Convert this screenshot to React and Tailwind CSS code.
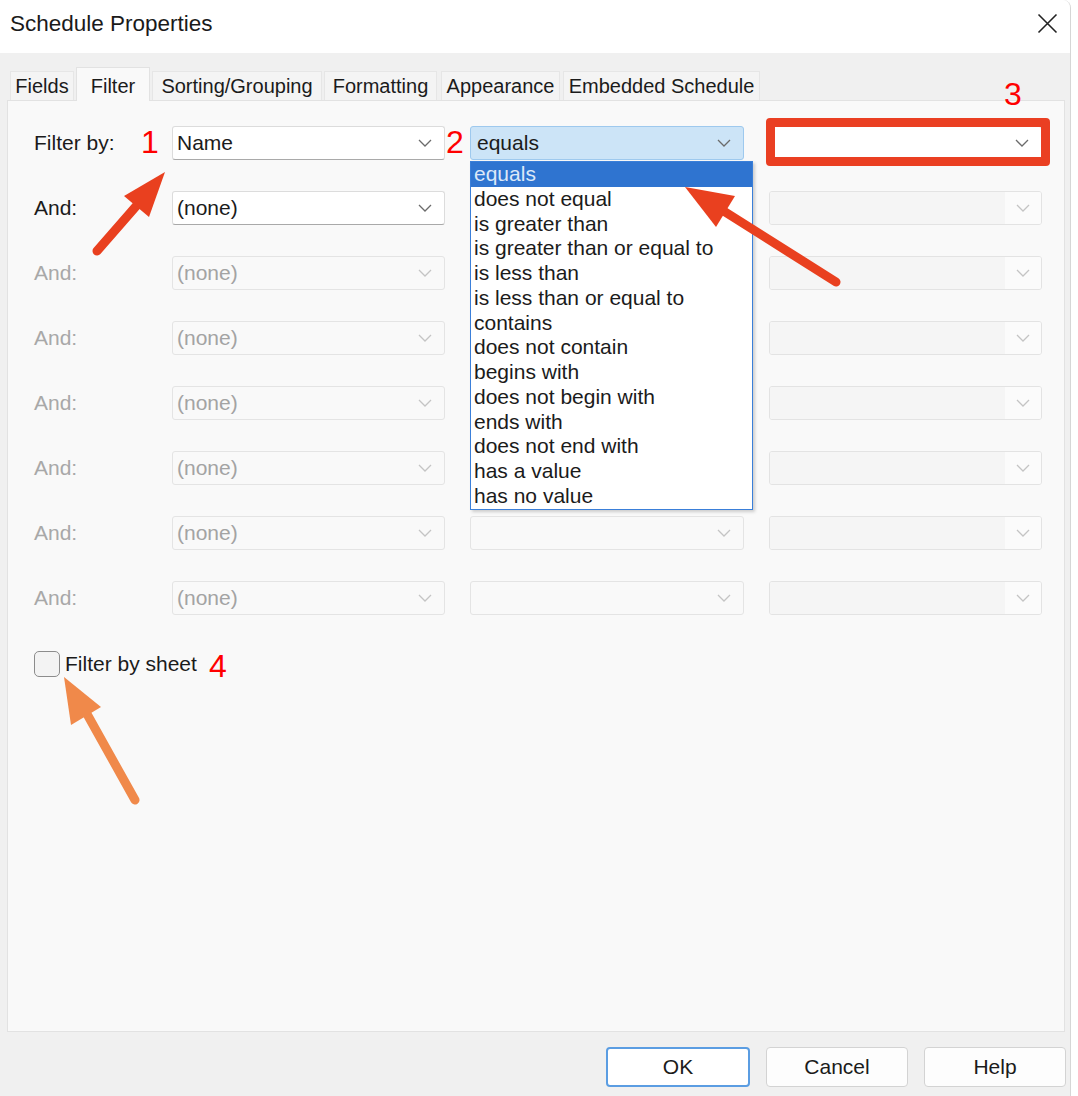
import React from "react";

const FONT = { fontFamily: '"Liberation Sans", Arial, sans-serif' };

function Chevron({ color = "#6b6b6b" }) {
  return (
    <svg width="14" height="8" viewBox="0 0 14 8" fill="none">
      <path d="M1 1l6 6 6-6" stroke={color} strokeWidth="1.3" />
    </svg>
  );
}

function Combo({ value = "", kind = "enabled" }) {
  if (kind === "focused") {
    return (
      <div className="h-[34px] w-full flex items-center justify-between pl-[6px] pr-[12px] bg-[#cce4f7] border border-[#9ec9ee] rounded-[3px] text-[#1b1b1b]">
        <span>{value}</span>
        <Chevron />
      </div>
    );
  }
  if (kind === "enabled") {
    return (
      <div className="h-[34px] w-full flex items-center justify-between pl-[4px] pr-[12px] bg-white border border-[#dcdcdc] border-b-[#a9a9a9] rounded-[3px] text-[#1b1b1b]">
        <span>{value}</span>
        <Chevron />
      </div>
    );
  }
  if (kind === "value") {
    return (
      <div className="h-[34px] w-full flex items-stretch border border-[#e3e3e3] rounded-[3px] overflow-hidden">
        <div className="flex-1 bg-[#f5f5f5]" />
        <div className="w-[36px] bg-[#fbfbfb] flex items-center justify-center">
          <Chevron color="#c4c4c4" />
        </div>
      </div>
    );
  }
  return (
    <div className="h-[34px] w-full flex items-center justify-between pl-[4px] pr-[12px] bg-[#f9f9f9] border border-[#e4e4e4] rounded-[3px] text-[#a3a3a3]">
      <span>{value}</span>
      <Chevron color="#c4c4c4" />
    </div>
  );
}

const OPERATORS = [
  "equals",
  "does not equal",
  "is greater than",
  "is greater than or equal to",
  "is less than",
  "is less than or equal to",
  "contains",
  "does not contain",
  "begins with",
  "does not begin with",
  "ends with",
  "does not end with",
  "has a value",
  "has no value",
];

const TABS = [
  { name: "Fields", cls: "w-[64px]" },
  { name: "Filter", cls: "w-[74px]" },
  { name: "Sorting/Grouping", cls: "w-[170px]" },
  { name: "Formatting", cls: "w-[113px]" },
  { name: "Appearance", cls: "w-[119px] ml-[2px]" },
  { name: "Embedded Schedule", cls: "w-[197px] ml-[1px]" },
];

export default function App() {
  const rows = [
    { label: "Filter by:", active: true },
    { label: "And:", active: true },
    { label: "And:" },
    { label: "And:" },
    { label: "And:" },
    { label: "And:" },
    { label: "And:" },
    { label: "And:" },
  ];

  return (
    <div className="relative w-[1078px] h-[1096px] bg-white overflow-hidden text-[21px]" style={FONT}>
      <div className="w-[1071px] h-full flex flex-col bg-[#f0f0f0] border-r border-[#d6d6d6] rounded-tr-[8px] overflow-hidden">
        {/* title bar */}
        <div className="h-[53px] bg-white flex items-center justify-between pl-[10px] pr-[12px]">
          <span className="text-[22.5px] text-[#1a1a1a] -mt-[6px]">Schedule Properties</span>
          <svg width="21" height="21" viewBox="0 0 21 21" className="-mt-[6px]">
            <path d="M1.5 1.5l18 18M19.5 1.5l-18 18" stroke="#222" strokeWidth="1.6" />
          </svg>
        </div>

        {/* tab strip */}
        <div className="pt-[15px] pl-[10px] flex items-end gap-[2px] h-[47px] text-[20px]">
          {TABS.map((t) =>
            t.name === "Filter" ? (
              <div
                key={t.name}
                className={`${t.cls} relative z-10 h-[34px] -mb-[1px] bg-[#f9f9f9] border border-b-0 border-[#e2e2e2] flex justify-center items-start pt-[3px] text-[#1b1b1b]`}
              >
                {t.name}
              </div>
            ) : (
              <div
                key={t.name}
                className={`${t.cls} h-[29px] bg-[#f4f4f4] border border-[#e6e6e6] border-b-0 flex justify-center items-center text-[#1b1b1b]`}
              >
                {t.name}
              </div>
            )
          )}
        </div>

        {/* panel */}
        <div className="ml-[7px] w-[1058px] h-[932px] bg-[#f9f9f9] border border-[#e2e2e2] pt-[25px] pl-[26px]">
          <div className="grid grid-cols-[113px_273px_274px_273px] gap-x-[25px] gap-y-[31px] items-center">
            {rows.map((r, i) => (
              <React.Fragment key={i}>
                <div className={r.active ? "text-[#1b1b1b]" : "text-[#a8a8a8]"}>{r.label}</div>
                <div>
                  <Combo value={i === 0 ? "Name" : "(none)"} kind={r.active ? "enabled" : "disabled"} />
                </div>
                <div className="relative">
                  {i === 0 ? <Combo value="equals" kind="focused" /> : <Combo kind="disabled" />}
                  {i === 0 && (
                    <div className="absolute z-20 left-0 top-[35px] w-[283px] h-[349px] bg-white border border-[#3a7fd9] shadow-[2px_2px_3px_rgba(0,0,0,0.18)]">
                      {OPERATORS.map((op, k) => (
                        <div
                          key={op}
                          className={
                            k === 0
                              ? "h-[24.75px] leading-[24.75px] pl-[3px] bg-[#2f74d0] text-[#dce8f8]"
                              : "h-[24.75px] leading-[24.75px] pl-[3px] text-[#1b1b1b]"
                          }
                        >
                          {op}
                        </div>
                      ))}
                    </div>
                  )}
                </div>
                <div className="relative">
                  {i === 0 ? (
                    <>
                      <div className="h-[34px] w-full flex items-center justify-end pr-[12px] bg-white border border-[#dcdcdc] rounded-[3px]">
                        <Chevron />
                      </div>
                      <div className="absolute -left-[3px] -right-[8px] -top-[8px] -bottom-[6px] border-[9px] border-[#ea3f22] rounded-[4px]" />
                    </>
                  ) : (
                    <Combo kind="value" />
                  )}
                </div>
              </React.Fragment>
            ))}
          </div>

          <div className="mt-[36px] h-[26px] flex items-center">
            <div className="w-[26px] h-[26px] rounded-[5px] border-[1.5px] border-[#8c8c8c] bg-[#f3f3f3]" />
            <span className="ml-[5px] text-[#1b1b1b]">Filter by sheet</span>
            <span className="ml-[12px] text-[32px] leading-none text-[#ff0000] mt-[4px]">4</span>
          </div>
        </div>

        {/* buttons */}
        <div className="mt-[15px] flex justify-end gap-[16px] pr-[4px]">
          <button className="w-[144px] h-[40px] rounded-[4px] border-2 border-[#5b9de2] bg-white text-[#1b1b1b]">OK</button>
          <button className="w-[142px] h-[40px] rounded-[4px] border border-[#d3d3d3] bg-[#fdfdfd] text-[#1b1b1b]">Cancel</button>
          <button className="w-[142px] h-[40px] rounded-[4px] border border-[#d3d3d3] bg-[#fdfdfd] text-[#1b1b1b]">Help</button>
        </div>
      </div>

      {/* annotation numbers */}
      <span className="absolute left-[141px] top-[126px] text-[32px] leading-none text-[#ff0000]">1</span>
      <span className="absolute left-[446px] top-[126px] text-[32px] leading-none text-[#ff0000]">2</span>
      <span className="absolute left-[1004px] top-[78px] text-[32px] leading-none text-[#ff0000]">3</span>

      {/* annotation arrows */}
      <svg className="absolute z-30 left-0 top-0 pointer-events-none" width="1078" height="1096" viewBox="0 0 1078 1096">
        <g stroke="#e9401f" strokeWidth="9" strokeLinecap="round" fill="#e9401f">
          <line x1="97" y1="251" x2="138" y2="204" />
          <line x1="836" y1="282" x2="722" y2="210" />
        </g>
        <polygon points="165,172 149,217 124,196" fill="#e9401f" />
        <polygon points="685,187 735,196 716,227" fill="#e9401f" />
        <line x1="135" y1="800" x2="87" y2="714" stroke="#f0894a" strokeWidth="9" strokeLinecap="round" />
        <polygon points="64,677 101,707 71,725" fill="#f0894a" />
      </svg>
    </div>
  );
}
